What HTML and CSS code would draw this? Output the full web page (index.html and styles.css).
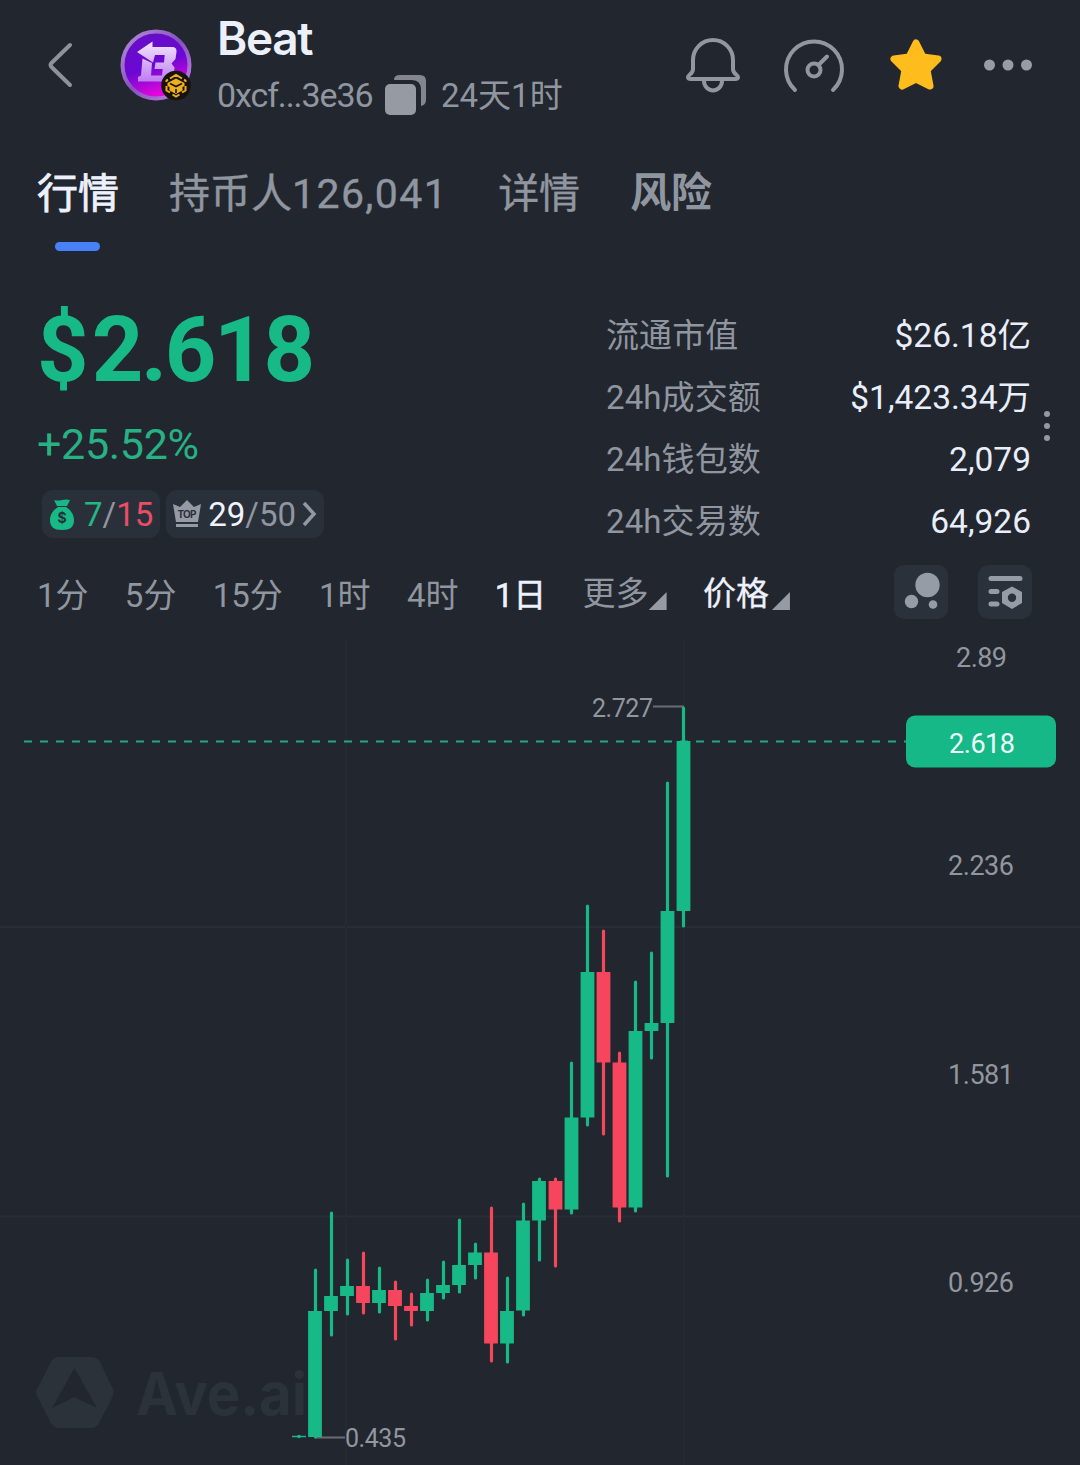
FILE: index.html
```html
<!DOCTYPE html>
<html lang="zh-CN">
<head>
<meta charset="utf-8">
<title>Beat</title>
<link rel="stylesheet" href="styles.css">
</head>
<body>
<main class="app">
  <header class="header">
    <svg class="back" width="28" height="48" viewBox="0 0 28 48"><path d="M24 4 5.500 22Q3.500 24 5.500 26L24 44"/></svg>
    <svg class="avatar" width="74" height="74" viewBox="0 0 74 74">
      <defs>
        <linearGradient id="coin" x1="0" y1="0" x2=".35" y2="1"><stop offset="0" stop-color="#6510c4"/><stop offset=".6" stop-color="#6a08d2"/><stop offset="1" stop-color="#e506dc"/></linearGradient>
        <linearGradient id="rim" x1="0" y1="0" x2="1" y2="1"><stop offset="0" stop-color="#b48fd8"/><stop offset=".5" stop-color="#8751bd"/><stop offset="1" stop-color="#c48be8"/></linearGradient>
        <linearGradient id="mark" x1="0" y1="0" x2="0" y2="1"><stop offset="0" stop-color="#f3e6ff"/><stop offset="1" stop-color="#bd7df0"/></linearGradient>
      </defs>
      <circle cx="37" cy="36" r="33.500" fill="url(#coin)" stroke="url(#rim)" stroke-width="4"/>
      <path fill="url(#mark)" fill-rule="evenodd" d="M18 23 33.500 12.500v5.500H53q5 0 4.500 5l-1 7-4 4.500 3 4-1 9-4 5H19v-4.500l3-1.500 1.500-17 9.500 4.500-1 12.500H43l.7-6.500H35.500l1-6.500H45l.7-7.500H36l-2 7.500Z"/>
      <circle cx="57" cy="56.500" r="14.800" fill="#16130f"/>
      <path d="M51 49.500 57 46l6 3.500M47.500 53 47.500 51.500 49 50.700M66.500 53V51.500L65 50.700M47.500 57v4.500l3.500 2M66.500 57v4.500l-3.500 2M53.500 65.500 57 67.500l3.500-2" fill="none" stroke="#efae1c" stroke-width="2"/>
      <path d="m57 49.500 8.500 4.500v3l-2 1v3.500L57 65l-6.500-3.500V58l-2-1v-3Z" fill="#efae1c"/>
      <path d="m51 54.500 6 3 6-3M57 60v4" fill="none" stroke="#16130f" stroke-width="1.600"/>
    </svg>
    <div class="identity">
      <h1 class="name">Beat</h1>
      <div class="meta">
        <span class="address">0xcf...3e36</span>
        <svg width="42" height="42" viewBox="0 0 42 42"><path d="M9 6q0-5 6-5h20q6 0 6 6v19q0 5-5 6V16Q36 6 27 6Z" fill="#83868e"/><rect x="0" y="10" width="31" height="31" rx="5" fill="#969aa3"/></svg>
        <span class="age">24天1时</span>
      </div>
    </div>
    <nav class="actions">
      <svg width="54" height="56" viewBox="0 0 54 56"><path d="M7 22a20 20 0 0 1 40 0v9c0 5 5 6 5 8q0 2-3 2H5q-3 0-3-2c0-2 5-3 5-8ZM18 43a9 9.500 0 0 0 18 0"/></svg>
      <svg width="62" height="56" viewBox="0 0 62 56"><path d="M12 51A28 28 0 1 1 50 51M36.500 25 44 17.500"/><circle cx="31" cy="31" r="6.500"/></svg>
      <svg class="star" width="54" height="54" viewBox="0 0 54 54"><path d="M27 4 34 18 49 20 38 31 41 47 27 40 13 47 16 31 5 20 20 18Z"/></svg>
      <svg class="more" width="50" height="12" viewBox="0 0 50 12"><circle cx="6.500" cy="6" r="5.500"/><circle cx="25" cy="6" r="5.500"/><circle cx="43.500" cy="6" r="5.500"/></svg>
    </nav>
  </header>

  <nav class="tabs">
    <span class="tab tab-active">行情</span>
    <span class="tab">持币人<span class="count">126,041</span></span>
    <span class="tab">详情</span>
    <span class="tab tab-risk">风险</span>
  </nav>

  <section class="summary">
    <div class="quote">
      <div class="price"><span class="currency">$</span>2.618</div>
      <div class="change">+25.52%</div>
      <div class="chips">
        <span class="chip">
          <svg class="bag" width="24" height="31" viewBox="0 0 24 31"><path d="M4 1q4 1 8 0t8 0l-3 6H7ZM8 8h8c5 3 8 8 8 13 0 7-4 10-12 10S0 28 0 21C0 16 3 11 8 8Z" fill="#17b987"/><text x="12" y="24" text-anchor="middle">$</text></svg>
          <span class="ratio"><b class="up">7</b>/<b class="down">15</b></span>
        </span>
        <span class="chip">
          <svg class="crown" width="28" height="28" viewBox="0 0 28 28"><path d="M0 4 7 7 14 0 21 7 28 4 25 22H3ZM3 24h22v3H3Z" fill="#959aa4"/><text x="14" y="18" text-anchor="middle" textLength="19">TOP</text></svg>
          <span class="ratio"><b class="strong">29</b>/50</span>
          <svg class="arrow" width="16" height="26" viewBox="0 0 16 26"><path d="M3 2 13 13 3 24"/></svg>
        </span>
      </div>
    </div>
    <dl class="stats">
      <div class="stat"><dt>流通市值</dt><dd>$26.18亿</dd></div>
      <div class="stat"><dt>24h成交额</dt><dd>$1,423.34万</dd></div>
      <div class="stat"><dt>24h钱包数</dt><dd>2,079</dd></div>
      <div class="stat"><dt>24h交易数</dt><dd>64,926</dd></div>
    </dl>
    <svg class="handle" width="8" height="32" viewBox="0 0 8 32"><circle cx="4" cy="4" r="3"/><circle cx="4" cy="16" r="3"/><circle cx="4" cy="28" r="3"/></svg>
  </section>

  <nav class="toolbar">
    <span>1分</span><span>5分</span><span>15分</span><span>1时</span><span>4时</span><span class="current">1日</span>
    <span class="select">更多<i class="corner"></i></span>
    <span class="select select-price">价格<i class="corner"></i></span>
    <div class="tools">
      <svg width="54" height="54" viewBox="0 0 54 54"><rect width="54" height="54" rx="10"/><circle cx="33.500" cy="20" r="12.200"/><circle cx="17.500" cy="36.500" r="6.700"/><circle cx="39" cy="39.500" r="4.300"/></svg>
      <svg width="54" height="54" viewBox="0 0 54 54"><rect width="54" height="54" rx="10"/><path class="bars" d="M13 13.500H42M13 26.500h6M13 39h6"/><path fill-rule="evenodd" d="m34 21.500 10 5.500v11l-10 6-10-6V27ZM34 28.500a4.200 4.200 0 1 0 0 8.400 4.200 4.200 0 0 0 0-8.400Z"/></svg>
    </div>
  </nav>

  <svg class="chart" width="1080" height="825" viewBox="0 640 1080 825">
    <path class="grid" d="M0 927H1080M0 1216.500H1080"/>
    <path class="grid grid-v" d="M346 640V1465M684 640V1465"/>
    <g class="watermark">
      <path fill-rule="evenodd" d="M59 1357H91Q97 1357 100 1362L112 1387Q115 1392 112 1398L99 1423Q96 1428 91 1428H59Q54 1428 51 1423L38 1398Q34 1392 38 1387L51 1362Q54 1357 59 1357ZM74.500 1368 52 1408 74.500 1397 97 1408Z"/>
      <text x="136" y="1415" textLength="171" lengthAdjust="spacingAndGlyphs">Ave.ai</text>
    </g>
    <path class="last" d="M24 741.500H906"/>
    <path class="leader" d="M653 706.500H684M315 1437.500H345"/>
    <path class="flat" d="M292 1436.500H306"/><circle class="dot" cx="299" cy="1436.500" r="1.800"/>
    <g class="rise">
      <path class="wick" d="M315.500 1270V1437M331.500 1213V1335M347.500 1260V1314M379.500 1268V1312M427.500 1280V1320M443.500 1262V1298M459.500 1220V1292M475.500 1244V1278M507.500 1278V1362M523.500 1204V1315M539.500 1179V1260M571.500 1063V1213M587.500 906V1125M635.500 982V1211M651.500 953V1058M667.500 783V1176M683.500 708V926"/>
      <path class="candle" d="M315 1311V1437M331 1296V1311M347 1286V1296M379 1290V1303M427 1293V1311M443 1285V1293M459 1265V1285M475 1252.500V1265M507 1311V1343.500M523 1220.500V1310.500M539 1181V1220.500M571.500 1117.500V1209.500M587.500 972V1117.500M635.500 1031V1207.500M651.500 1023V1031M667.500 911V1023M683.500 741V911"/>
    </g>
    <g class="fall">
      <path class="wick" d="M363.500 1253V1313M395.500 1282V1339M411.500 1294V1325M491.500 1208V1361M555.500 1179V1266M603.500 931V1134M619.500 1053V1221"/>
      <path class="candle" d="M363 1286V1303M395 1290V1306M411 1306V1311M491 1252.500V1343.500M555.500 1181V1209.500M603.500 972V1062.500M619.500 1062.500V1207.500"/>
    </g>
    <g class="marks"><text x="592" y="717" textLength="61">2.727</text><text x="345" y="1447" textLength="61">0.435</text></g>
    <g class="axis">
      <text x="981.500" y="667" textLength="51">2.89</text>
      <text x="981" y="875" textLength="66">2.236</text>
      <text x="981" y="1084" textLength="66">1.581</text>
      <text x="981" y="1292" textLength="66">0.926</text>
      <rect x="906" y="715.500" width="150" height="52" rx="9"/>
      <text class="tag" x="982" y="753" textLength="66">2.618</text>
    </g>
  </svg>
</main>
</body>
</html>
```
FILE: styles.css
```css
* { box-sizing: border-box; }
body { margin: 0; background: #22262e; }
.app {
  width: 1080px;
  height: 1465px;
  overflow: hidden;
  display: flex;
  flex-direction: column;
  color: #9096a0;
  font-family: Roboto, "Noto Sans CJK SC", sans-serif;
  font-size: 33px;
}
svg { display: block; flex: none; }

.header { display: flex; height: 150px; padding: 0 47px 0 46px; }
.back { margin-top: 41px; fill: none; stroke: #8e9299; stroke-width: 4; stroke-linecap: round; }
.avatar { margin: 29px 0 0 45px; }
.identity { margin-left: 24px; }
.name {
  margin: 9px 0 0;
  height: 59px;
  line-height: 59px;
  font-family: Inter, sans-serif;
  font-size: 46px;
  font-weight: 600;
  letter-spacing: -1.400px;
  color: #ecf0fb;
}
.meta { display: flex; align-items: center; height: 54px; line-height: 54px; white-space: nowrap; }
.address { width: 168px; font-size: 34px; letter-spacing: -1.100px; }
.meta svg { margin-right: 14px; }
.age { padding-top: 2px; }
.actions { display: flex; margin-left: auto; }
.actions svg { fill: none; stroke: #92969f; stroke-width: 4; stroke-linecap: round; stroke-linejoin: round; margin-top: 38px; }
.actions svg + svg { margin-left: 44px; }
.actions svg:nth-child(2) { margin-left: 43px; margin-top: 39px; }
.actions .star { fill: #ffbd1d; stroke: #ffbd1d; stroke-width: 7; margin-top: 39px; }
.actions .more { fill: #999da3; stroke: none; margin: 59px 0 0 40px; }

.tabs { display: flex; gap: 50px; height: 148px; padding: 14px 0 0 37px; font-size: 41px; line-height: 60px; -webkit-text-stroke: .4px; }
.tab { height: 90px; white-space: nowrap; }
.count { letter-spacing: 1.400px; }
.tab-active { display: flex; flex-direction: column; align-items: center; color: #edf1fc; -webkit-text-stroke: .8px; }
.tab-active::after { content: ""; width: 45px; height: 9px; margin: 18px 1px 0 0; border-radius: 5px; background: #4780f7; }
.tab-risk { font-weight: 700; margin-top: -1px; -webkit-text-stroke: 0; }

.summary { display: flex; height: 255px; }
.quote { width: 606px; padding-left: 37px; }
.price { height: 112px; padding-left: -1px; line-height: 105px; font-size: 90px; font-weight: 700; color: #17b987; letter-spacing: -2.300px; }
.currency { letter-spacing: 3px; }
.change { height: 70px; line-height: 69px; font-size: 43px; letter-spacing: -.300px; color: #27b184; }
.chips { display: flex; gap: 6px; margin: 10px 0 0 5px; }
.chip { display: flex; align-items: center; height: 48px; padding: 0 7px 0 8px; border-radius: 11px; background: #2a303a; line-height: 48px; font-size: 33px; }
.chip b { font-weight: 400; }
.ratio { padding-top: 2px; }
.chip .up { color: #24b588; }
.chip .down { color: #e94e68; }
.chip .strong { color: #f0f3fb; }
.bag { margin-right: 10px; }
.bag text { font: 700 14px Inter, sans-serif; fill: #29303a; }
.crown { margin: 0 7px 0 -1px; }
.crown text { font: 700 10px Inter, sans-serif; fill: #29303a; }
.arrow { margin-left: 5px; fill: none; stroke: #9298a3; stroke-width: 3.500; }

.stats { width: 425px; margin: 7px 0 0; }
.stat { display: flex; justify-content: space-between; height: 62px; line-height: 62px; white-space: nowrap; }
.stat dt { letter-spacing: .1px; }
.stat dd { margin: 0; color: #e9eefb; font-size: 33.500px; }
.handle { margin: 112px 0 0 12px; fill: #9499a2; }

.toolbar { display: flex; gap: 36.300px; height: 87px; padding: 12px 48px 0 37px; line-height: 61px; white-space: nowrap; }
.current { color: #edf1fc; -webkit-text-stroke: .5px; }
.select { display: flex; margin-top: -2px; }
.select-price { color: #edf1fc; -webkit-text-stroke: .3px; }
.corner { width: 18px; height: 18px; margin-top: 29px; background: #969aa3; clip-path: polygon(100% 0, 100% 100%, 0 100%); }
.select-price .corner { margin-left: 3px; }
.tools { display: flex; gap: 30px; margin-left: auto; }
.tools svg { fill: #969ca5; }
.tools rect { fill: #2a313b; }
.tools .bars { fill: none; stroke: #969ca5; stroke-width: 5; stroke-linecap: round; }

.chart { fill: none; }
.grid { stroke: #292d35; stroke-width: 2; }
.grid-v { stroke: #252931; }
.watermark { fill: #2c323a; }
.watermark text { font: 700 59px Inter, sans-serif; }
.last { stroke: #20a97e; stroke-width: 2; stroke-dasharray: 8 8; }
.leader { stroke: #686d75; stroke-width: 2; }
.flat { stroke: #17b987; stroke-width: 1.500; }
.dot { fill: #17b987; }
.rise { stroke: #17b987; }
.fall { stroke: #f6465d; }
.wick { stroke-width: 3.200; stroke-linecap: round; }
.candle { stroke-width: 13.800; }
.marks { font-size: 25px; fill: #92969f; }
.axis { font-size: 27px; fill: #92969f; text-anchor: middle; }
.axis rect { fill: #15b886; }
.axis .tag { fill: #eefffa; }
```
